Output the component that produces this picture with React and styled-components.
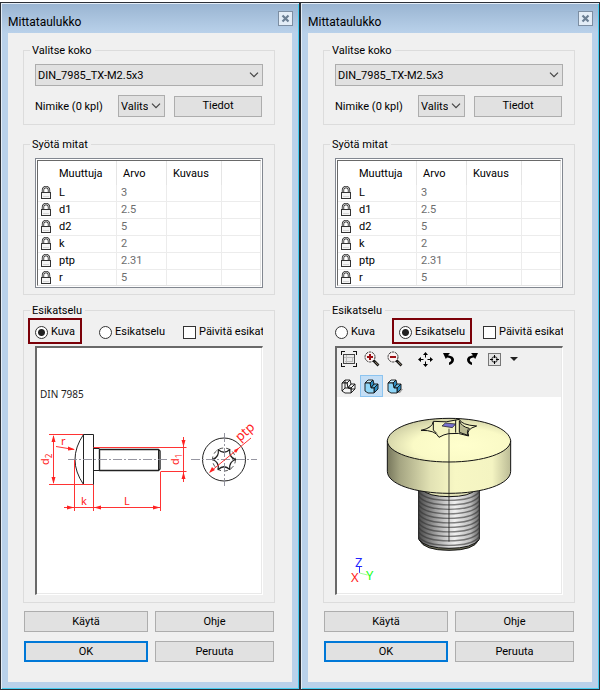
import { useId, useState } from "react";
import styled, { createGlobalStyle, css } from "styled-components";

const GlobalStyle = createGlobalStyle`
  * {
    box-sizing: border-box;
  }
  body {
    margin: 0;
    background: #fff;
    color: #000;
    font-family: Roboto, "Liberation Sans", sans-serif;
    font-size: 11px;
    line-height: 16px;
  }
  button, select, input {
    font: inherit;
    color: inherit;
  }
`;

const Page = styled.main`
  display: flex;
  padding-top: 2px;
`;

const Frame = styled.section`
  flex: 1;
  min-width: 0;
  border: 1px solid #2b2f36;
  background: #b9d1ea;
  box-shadow: inset 1px 1px 0 #e4edf7, inset -1px -1px 0 #43cdf0;
  padding: 0 7px 7px;
`;

const TitleBar = styled.header`
  display: flex;
  justify-content: space-between;
  align-items: flex-start;
  height: 30px;
  margin: 0 -6px;
  padding: 8px 5px 0 6px;
  background: linear-gradient(#99b4d1, #b9d1ea);
  box-shadow: inset 0 1px 0 #e4edf7;
`;

const Title = styled.h1`
  margin: 0;
  padding-top: 3px;
  font-size: 12px;
  font-weight: normal;
`;

const CloseButton = styled.button`
  display: grid;
  place-items: center;
  width: 15px;
  height: 15px;
  padding: 0;
  border: 1px solid #7c8ea2;
  background: #e3edf7;
`;

const Body = styled.div`
  padding: 9px 17px 20px 15px;
  background: #f0f0f0;
`;

const Group = styled.fieldset`
  min-width: 0;
  margin: 0 0 ${(props) => props.$space}px;
  padding: ${(props) => (props.$tight ? 0 : 6)}px 11px ${(props) => props.$bottom}px;
  border: 1px solid #dcdcdc;
`;

const Legend = styled.legend`
  height: 16px;
  margin-left: -5px;
  padding: 1px 3px 0 2px;
`;

const SelectBox = styled.div`
  position: relative;
  svg {
    position: absolute;
    right: 4px;
    top: 8px;
    pointer-events: none;
  }
`;

const Select = styled.select`
  appearance: none;
  display: block;
  width: 100%;
  height: 22px;
  padding: 1px 16px 0 2px;
  border: 1px solid #adadad;
  border-radius: 0;
  background: #e1e1e1;
`;

const ItemRow = styled.div`
  display: grid;
  grid-template-columns: 83px 47px 1fr;
  align-items: center;
  margin-top: 9px;
`;

const ItemLabel = styled.label`
  padding-top: 2px;
`;

const Button = styled.button`
  height: 21px;
  padding: 0;
  border: ${(props) => (props.$primary ? "2px solid #0078d7" : "1px solid #adadad")};
  background: #e1e1e1;
`;

const InfoButton = styled(Button)`
  margin: 0 1px 0 9px;
`;

const TableFrame = styled.div`
  height: 130px;
  padding: 1px;
  border: 1px solid #828790;
  background: #fff;
`;

const TableView = styled.div`
  height: 100%;
  overflow: hidden;
  border: 1px solid #e3e3e3;
  border-top-color: #696969;
  border-left-color: #696969;
`;

const Table = styled.table`
  width: 100%;
  table-layout: fixed;
  border-collapse: separate;
  border-spacing: 0;
`;

const HeadCell = styled.th`
  height: 24px;
  padding: 2px 0 0 ${(props) => props.$indent || 6}px;
  border-right: 1px solid #e5e5e5;
  font-weight: normal;
  text-align: left;
  &:last-child {
    border-right: none;
  }
`;

const Cell = styled.td`
  height: 17px;
  padding: 0 0 0 ${(props) => props.$indent || 0}px;
  border-bottom: 1px solid #ececec;
  border-right: ${(props) => (props.$divider ? "1px solid #ececec" : "none")};
  color: ${(props) => (props.$muted ? "#6d6d6d" : "#000")};
  line-height: 16px;
  svg {
    display: block;
  }
`;

const Options = styled.div`
  display: grid;
  grid-template-columns: 64px 84px minmax(0, 1fr);
  align-items: center;
  height: 28px;
`;

const Option = styled.label`
  position: relative;
  display: flex;
  align-items: center;
  justify-self: start;
  gap: 3px;
  height: 14px;
  max-width: 100%;
  white-space: nowrap;
  ${(props) =>
    props.$marked &&
    css`
      &::after {
        content: "";
        position: absolute;
        inset: -7px -7px -5px;
        border: 2px solid #7b0008;
        pointer-events: none;
      }
    `}
`;

const ClippedOption = styled(Option)`
  height: 16px;
  overflow: hidden;
`;

const Radio = styled.input`
  appearance: none;
  flex: none;
  width: 13px;
  height: 13px;
  margin: 0;
  border: 1px solid #333;
  border-radius: 50%;
  background: #fff;
  &:checked {
    background: radial-gradient(circle, #222 3px, #fff 4px);
  }
`;

const Checkbox = styled.input`
  appearance: none;
  flex: none;
  width: 13px;
  height: 13px;
  margin: 0;
  border: 1px solid #333;
  background: #fff;
  &:checked {
    background: #333;
    box-shadow: inset 0 0 0 2px #fff;
  }
`;

const Preview = styled.div`
  height: 249px;
  overflow: hidden;
  border-style: solid;
  border-width: 2px 1px 1px 2px;
  border-color: #696969 #fff #fff #696969;
  box-shadow: inset -1px -1px 0 #e9e9e9;
  background: #fff;
  svg {
    display: block;
  }
`;

const Toolbar = styled.div`
  height: 49px;
  margin-right: 1px;
  background: #f0f0f0;
`;

const ToolRow = styled.div`
  display: flex;
  height: ${(props) => props.$height}px;
`;

const Tool = styled.button`
  display: grid;
  place-items: center;
  width: ${(props) => props.$width || 23}px;
  height: 22px;
  margin-left: ${(props) => (props.$apart ? 8 : 0)}px;
  padding: 0;
  border: 1px solid ${(props) => (props.$active ? "#8cc4f0" : "transparent")};
  background: ${(props) => (props.$active ? "#c4def5" : "none")};
`;

const Actions = styled.div`
  display: grid;
  grid-template-columns: 124fr 119fr;
  gap: 9px 7px;
  padding: 0 1px;
`;

const Chevron = () => (
  <svg width="10" height="6" viewBox="0 0 10 6" fill="none" stroke="#444" strokeWidth="1.2">
    <path d="M1 .7 5 4.7 9 .7" />
  </svg>
);

const LockIcon = () => (
  <svg width="10" height="14" viewBox="0 0 10 14" fill="none" stroke="#333">
    <path d="M2 7V4a3 3 0 0 1 6 0v3" strokeWidth="2.4" />
    <path d="M2 7V4a3 3 0 0 1 6 0v3" stroke="#ddd" strokeWidth=".8" />
    <rect x=".5" y="6.5" width="9" height="6" fill="#f5f5f5" />
    <path d="M2 10.5h6" stroke="#d5d5d5" />
  </svg>
);

const FitIcon = () => (
  <svg width="16" height="16" viewBox="0 0 16 16" fill="none" shapeRendering="crispEdges">
    <path d="M.5 4V.5H4M12 .5h3.5V4M15.5 12v3.5H12M4 15.5H.5V12" stroke="#111" />
    <rect x="2.5" y="3.5" width="11" height="9" fill="#e8e8e8" stroke="#444" />
    <path d="M5.5 4v8M3 6.5h10M11.5 6.5v4h-8" stroke="#bbb" />
  </svg>
);

const ZoomIcon = ({ plus }) => (
  <svg width="16" height="16" viewBox="0 0 16 16" fill="none">
    <circle cx="6" cy="6" r="5" fill="#fbf3f3" stroke="#333" strokeDasharray="2.4 .7" />
    <path d={plus ? "M3 6h6M6 3v6" : "M3 6h6"} stroke="#9b0f14" strokeWidth="2" />
    <path d="m9.5 9.5 5 5" stroke="#111" strokeWidth="2.6" />
    <path d="m11 10.8 3.2 3.2" stroke="#b9a58a" strokeWidth=".8" />
  </svg>
);

const PanIcon = () => (
  <svg width="15" height="15" viewBox="0 0 15 15">
    <path d="M7.5 0 10 3H5zM7.5 15 5 12h5zM0 7.5 3 5v5zM15 7.5 12 10V5z" />
    <path d="M7.5 2v3.5M7.5 9.5V13M2 7.5h3.5M9.5 7.5H13" stroke="#000" />
  </svg>
);

const TurnIcon = ({ mirrored }) => (
  <svg width="12" height="12" viewBox="0 0 12 12">
    <g transform={mirrored ? "matrix(-1 0 0 1 12 0)" : undefined}>
      <path d="M0 0h7L5 2.2c4 .6 6 2.2 6 4.6 0 2.7-2 4.4-5 5.2V9.5c1.6-.7 2.2-1.5 2.2-2.5C8.2 5.4 6.5 4.6 4 4.4L2.8 6z" />
    </g>
  </svg>
);

const TargetIcon = () => (
  <svg width="13" height="13" viewBox="0 0 13 13" fill="none">
    <rect x=".5" y=".5" width="12" height="12" fill="#e4e4e4" stroke="#777" />
    <circle cx="6.5" cy="6.5" r="2.8" stroke="#222" />
    <path d="M6.5 2v3M6.5 8v3M2 6.5h3M8 6.5h3" stroke="#000" />
  </svg>
);

const DropIcon = () => (
  <svg width="8" height="4" viewBox="0 0 8 4">
    <path d="M0 0h8L4 4z" fill="#222" />
  </svg>
);

const BlockIcon = ({ kind }) => {
  const wire = kind === "wire";
  const front = wire ? "#f4f4f4" : "#8fd6f8";
  const side = wire ? "#f4f4f4" : "#2f8cc0";
  return (
    <svg width="17" height="15" viewBox="-2 -1 17 15" stroke="#111" strokeWidth=".9">
      {kind === "shadow" && <path d="m8 13 3-4h4l-3 4z" fill="#999" stroke="none" />}
      <path d="M0 3 3 0h5L5 3z" fill={wire ? front : "#c9ecfc"} />
      <path d="m5 3 3-3 1 4-3 4z" fill={side} />
      <path d="m6 8 3-4h4L9 8z" fill={wire ? front : "#5fb8e4"} />
      <path d="m9 8 4-4v5l-4 4z" fill={side} />
      <path d="M0 3h5l1 5h3v5H3l-3-2z" fill={front} />
      {wire && <path d="M3 0v8l-3 3M3 8h3l3 1h4" fill="none" />}
    </svg>
  );
};

// Side and end view of the screw with its dimension lines
const ScrewDrawing = () => (
  <svg width="225" height="246" viewBox="0 0 225 246">
    <text x="3" y="50" fontFamily="Noto Sans, sans-serif" fontSize="10" fill="#222">DIN 7985</text>
    <g fill="none" stroke="#222" strokeLinejoin="round">
      <path d="M46.5 86.5h10v50h-10zM46.5 86.5q-17 25 0 50" />
      <path d="M56.5 100.5h6M56.5 122.5h6" />
      <path d="M62.5 101.5h59l1.5 1.5v18l-1.5 1.5h-59z" strokeWidth="1.4" />
      <path d="M121.5 101v22" />
      <circle cx="187" cy="111.5" r="21.5" />
      <circle cx="187" cy="111.5" r="11.5" strokeDasharray="4 3" strokeWidth=".8" />
      <path
        d="M198.5 111.5Q191.5 114 192.8 121.5 187 116 181.2 121.5 182.5 114 175.5 111.5 182.5 109 181.2 101.5 187 107 192.8 101.5 191.5 109 198.5 111.5z"
        strokeWidth="1.2"
      />
    </g>
    <g fill="none" stroke="#8a8a96" strokeWidth=".9" strokeDasharray="9 2 2 2">
      <path d="M31 111.5h99M154 111.5h66M187.5 85v53" />
    </g>
    <g fill="none" stroke="#f33">
      <path d="M12 86.5h34M12 136.5h44M16.5 88v47M37.5 112v51M56.5 137v26M56.5 99.5h93M123.5 123.5h26M123.5 124v39M27 159.5h96M146.5 89v45M19 98.5l18 3M173 124l41-34" />
    </g>
    <g fill="#f22">
      <path d="m16.5 87 2 7h-4zM16.5 136l-2-7h4zM37 159.5l-7-2v4zM57 159.5l7-2v4zM123 159.5l-7-2v4z" />
      <path d="m146.5 99-2-7h4zM146.5 124l-2 7h4zM38 101.5l-7-3v4zM172 125l3-6 3 3zM202 100l-5 2 2 3z" />
    </g>
    <g fill="#f22" fontFamily="Noto Sans, sans-serif" fontSize="11">
      <text x="24" y="97">r</text>
      <text x="44" y="157">k</text>
      <text x="87" y="157">L</text>
      <text transform="translate(12 117) rotate(-90)">d<tspan fontSize="8" dy="3">2</tspan></text>
      <text transform="translate(142 117) rotate(-90)">d<tspan fontSize="8" dy="3">1</tspan></text>
      <text transform="translate(203 94) rotate(-42)" fontSize="13">ptp</text>
    </g>
  </svg>
);

const threads = [0, 1, 2, 3, 4, 5, 6, 7, 8, 9, 10];

// Shaded model; its group is drawn at three units to the pixel
const ScrewModel = () => {
  const id = useId();
  return (
    <svg width="224" height="197" viewBox="0 0 224 197">
      <defs>
        <linearGradient id={`${id}side`}>
          <stop offset="0" stopColor="#77775c" />
          <stop offset=".1" stopColor="#a5a582" />
          <stop offset=".35" stopColor="#e2e2b4" />
          <stop offset=".55" stopColor="#f7f7c4" />
          <stop offset=".85" stopColor="#f4f4c2" />
          <stop offset="1" stopColor="#bcbc96" />
        </linearGradient>
        <radialGradient id={`${id}top`} cx=".6" cy=".62" r=".65">
          <stop offset="0" stopColor="#ffffcd" />
          <stop offset=".6" stopColor="#fafac6" />
          <stop offset="1" stopColor="#cfcfa5" />
        </radialGradient>
        <linearGradient id={`${id}shaft`}>
          <stop offset="0" stopColor="#4a4a4a" />
          <stop offset=".35" stopColor="#b5b5b5" />
          <stop offset=".6" stopColor="#f0f0f0" />
          <stop offset=".85" stopColor="#bdbdbd" />
          <stop offset="1" stopColor="#666" />
        </linearGradient>
      </defs>
      <g transform="translate(33 3) scale(.33333)" fill="none" stroke="#111" strokeWidth="3">
        <path d="M148 420q14 31 89 31t89-31z" fill="#77775f" />
        <path d="M146 262v156q20 27 91 27t91-27V262z" fill={`url(#${id}shaft)`} />
        {threads.map((n) => (
          <path
            key={n}
            d={`M147 ${276 + n * 13.5}q20 25 90 25t90-25`}
            stroke="#333"
            strokeWidth="4"
            strokeOpacity=".6"
          />
        ))}
        <path d="M155 268q20 22 82 22t82-22z" fill="#e5e5b8" />
        <path d="M52 122v92c0 38 82 66 185 66s185-28 185-66v-92z" fill={`url(#${id}side)`} />
        <path d="M52 122c4-35 75-67 185-67s181 32 185 67c0 36-82 64-185 64S52 158 52 122z" fill={`url(#${id}top)`} />
        <path
          d="M153 91Q188 84 190 64 228 70 268 58 274 75 320 78 286 88 296 108 264 96 236 101 222 103 207 112 197 90 153 91z"
          fill="#f3f3c0"
        />
        <path d="M190 66v24l10 10M257 60v38" />
        <path d="M268 62v35l26 9q-5-14 4-21-24-5-30-23z" fill="#b9b992" />
        <path d="m216 78 10-9 31 3-10 11z" fill="#7770cf" strokeWidth="2" />
        <path d="M237 86v339" strokeOpacity=".75" />
      </g>
      <g fontFamily="Noto Sans, sans-serif" fontSize="13">
        <path d="M22.5 176v-7" stroke="#33f" />
        <path d="M22.5 176l8 2" stroke="#9f9" />
        <text x="18" y="170" fill="#22f">Z</text>
        <text x="14" y="185" fill="#f22">X</text>
        <text x="29" y="183" fill="#2f2">Y</text>
      </g>
    </svg>
  );
};

const PreviewToolbar = () => (
  <Toolbar>
    <ToolRow $height={27}>
      <Tool aria-label="Sovita"><FitIcon /></Tool>
      <Tool aria-label="Lähennä"><ZoomIcon plus /></Tool>
      <Tool aria-label="Loitonna"><ZoomIcon /></Tool>
      <Tool aria-label="Siirrä" $apart><PanIcon /></Tool>
      <Tool aria-label="Kierrä vasemmalle"><TurnIcon /></Tool>
      <Tool aria-label="Kierrä oikealle"><TurnIcon mirrored /></Tool>
      <Tool aria-label="Näkymä"><TargetIcon /></Tool>
      <Tool aria-label="Näkymät" $width={15}><DropIcon /></Tool>
    </ToolRow>
    <ToolRow $height={22}>
      <Tool aria-label="Rautalanka"><BlockIcon kind="wire" /></Tool>
      <Tool aria-label="Varjostettu" $active><BlockIcon /></Tool>
      <Tool aria-label="Varjo"><BlockIcon kind="shadow" /></Tool>
    </ToolRow>
  </Toolbar>
);

const variables = [
  ["L", "3"],
  ["d1", "2.5"],
  ["d2", "5"],
  ["k", "2"],
  ["ptp", "2.31"],
  ["r", "5"],
];

const DimensionDialog = (props) => {
  const [mode, setMode] = useState(props.mode);
  const id = useId();

  const handleMode = (e) => {
    setMode(e.target.value);
  };

  return (
    <Frame role="dialog" aria-labelledby={`${id}title`}>
      <TitleBar>
        <Title id={`${id}title`}>Mittataulukko</Title>
        <CloseButton aria-label="Sulje">
          <svg width="9" height="9" viewBox="0 0 9 9" stroke="#6b7f93" strokeWidth="2.2">
            <path d="m1.5 1.5 6 6M7.5 1.5l-6 6" />
          </svg>
        </CloseButton>
      </TitleBar>
      <Body>
        <Group $space={11} $bottom={7}>
          <Legend>Valitse koko</Legend>
          <SelectBox>
            <Select aria-label="Valitse koko">
              <option>DIN_7985_TX-M2.5x3</option>
            </Select>
            <Chevron />
          </SelectBox>
          <ItemRow>
            <ItemLabel htmlFor={`${id}item`}>Nimike (0 kpl)</ItemLabel>
            <SelectBox>
              <Select id={`${id}item`}>
                <option>Valits</option>
              </Select>
              <Chevron />
            </SelectBox>
            <InfoButton>Tiedot</InfoButton>
          </ItemRow>
        </Group>

        <Group $space={7} $bottom={6}>
          <Legend>Syötä mitat</Legend>
          <TableFrame>
            <TableView>
              <Table>
                <colgroup>
                  <col width="21" />
                  <col width="58" />
                  <col width="50" />
                  <col width="55" />
                  <col />
                </colgroup>
                <thead>
                  <tr>
                    <HeadCell colSpan={2} $indent={21}>Muuttuja</HeadCell>
                    <HeadCell>Arvo</HeadCell>
                    <HeadCell>Kuvaus</HeadCell>
                    <HeadCell />
                  </tr>
                </thead>
                <tbody>
                  {variables.map(([name, value]) => (
                    <tr key={name}>
                      <Cell $indent={3}><LockIcon /></Cell>
                      <Cell $divider>{name}</Cell>
                      <Cell $divider $muted $indent={4}>{value}</Cell>
                      <Cell $divider />
                      <Cell />
                    </tr>
                  ))}
                </tbody>
              </Table>
            </TableView>
          </TableFrame>
        </Group>

        <Group $space={8} $bottom={7} $tight>
          <Legend>Esikatselu</Legend>
          <Options>
            <Option $marked={mode === "image"}>
              <Radio type="radio" name={id} value="image" checked={mode === "image"} onChange={handleMode} />
              Kuva
            </Option>
            <Option $marked={mode === "model"}>
              <Radio type="radio" name={id} value="model" checked={mode === "model"} onChange={handleMode} />
              Esikatselu
            </Option>
            <ClippedOption>
              <Checkbox type="checkbox" />
              Päivitä esikatselu
            </ClippedOption>
          </Options>
          <Preview>
            {mode === "image" ? (
              <ScrewDrawing />
            ) : (
              <>
                <PreviewToolbar />
                <ScrewModel />
              </>
            )}
          </Preview>
        </Group>

        <Actions>
          <Button>Käytä</Button>
          <Button>Ohje</Button>
          <Button $primary>OK</Button>
          <Button>Peruuta</Button>
        </Actions>
      </Body>
    </Frame>
  );
};

const App = () => (
  <>
    <GlobalStyle />
    <Page>
      <DimensionDialog mode="image" />
      <DimensionDialog mode="model" />
    </Page>
  </>
);

export default App;
